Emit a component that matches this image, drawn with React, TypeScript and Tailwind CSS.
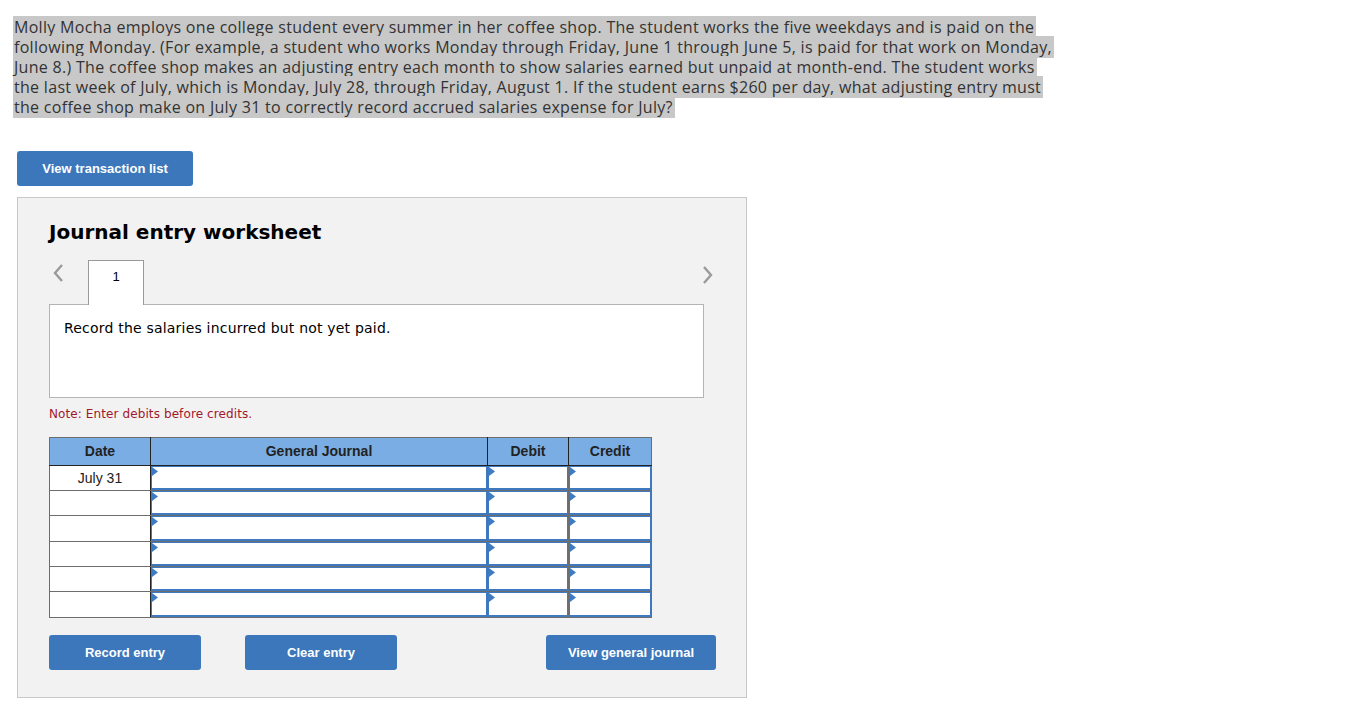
const LINES = [
  "Molly Mocha employs one college student every summer in her coffee shop. The student works the five weekdays and is paid on the",
  "following Monday. (For example, a student who works Monday through Friday, June 1 through June 5, is paid for that work on Monday,",
  "June 8.) The coffee shop makes an adjusting entry each month to show salaries earned but unpaid at month-end. The student works",
  "the last week of July, which is Monday, July 28, through Friday, August 1. If the student earns $260 per day, what adjusting entry must",
  "the coffee shop make on July 31 to correctly record accrued salaries expense for July?",
];

const ROWS = [
  { date: "July 31", h: "h-[25px]", inner: "h-[24px]" },
  { date: "", h: "h-[25px]", inner: "h-[24px]" },
  { date: "", h: "h-[26px]", inner: "h-[25px]" },
  { date: "", h: "h-[25px]", inner: "h-[24px]" },
  { date: "", h: "h-[25px]", inner: "h-[24px]" },
  { date: "", h: "h-[26px]", inner: "h-[25px]" },
];

function Marker() {
  return (
    <svg width="6" height="9" viewBox="0 0 6 9" className="absolute left-0 top-0">
      <path d="M0 0 L6 4.5 L0 9 Z" fill="#3d7cc4" />
    </svg>
  );
}

function InputCell({ w, inner }: { w: string; inner: string }) {
  return (
    <td className={`${w} border border-[#6d6d6d] bg-white p-0`}>
      <div className={`relative ${inner} border border-[#3f79c0] border-b-2 bg-white`}>
        <Marker />
      </div>
    </td>
  );
}

function BlueButton({ label, className }: { label: string; className?: string }) {
  return (
    <button
      className={`h-[35px] rounded-[3px] bg-[#3b77ba] text-[13px] font-bold text-white ${className ?? ""}`}
      style={{ fontFamily: "'Liberation Sans', Arial, sans-serif" }}
    >
      {label}
    </button>
  );
}

export default function App() {
  return (
    <div className="min-h-[701px] bg-white px-[13px] pt-[17px]">
      <p
        className="text-[16px] leading-5 tracking-[0.3px] text-[#333]"
        style={{ fontFamily: "'Open Sans', sans-serif" }}
      >
        {LINES.map((l, i) => (
          <span key={i}>
            <span className="bg-[#c8c8c8] pr-[2px] pl-[1px]">{l}</span>
            {i < LINES.length - 1 && <br />}
          </span>
        ))}
      </p>

      <div className="mt-[34px] pl-[4px]">
        <BlueButton label="View transaction list" className="w-[176px]" />
      </div>

      <div className="mt-[11px] ml-[4px] w-[730px] border border-[#c8c8c8] bg-[#f2f2f2] px-[31px] pt-[19px] pb-[27px]">
        <h2
          className="text-[20px] font-bold text-black"
          style={{ fontFamily: "'DejaVu Sans', Verdana, sans-serif" }}
        >
          Journal entry worksheet
        </h2>

        <div className="mt-[13px] flex w-[665px] items-end">
          <div className="flex h-[44px] w-[39px] items-start justify-start pl-[2px] pt-[2px]">
            <svg width="14" height="22" viewBox="0 0 14 22">
              <path d="M11 3 L4 11 L11 19" stroke="#9a9a9a" strokeWidth="2.4" fill="none" />
            </svg>
          </div>
          <div
            className="relative z-10 -mb-px flex h-[45px] w-[56px] justify-center border border-b-0 border-[#999] bg-white pt-[6px] text-[13px] text-black"
            style={{ fontFamily: "'Liberation Sans', Arial, sans-serif" }}
          >
            1
          </div>
          <div className="flex h-[44px] flex-1 items-start justify-end pt-[4px]">
            <svg width="14" height="22" viewBox="0 0 14 22">
              <path d="M4 3 L11 11 L4 19" stroke="#9a9a9a" strokeWidth="2.4" fill="none" />
            </svg>
          </div>
        </div>

        <div
          className="h-[94px] w-[655px] border border-[#b4b4b4] bg-white px-[14px] pt-[13px] text-[14px] tracking-[0.2px] text-black"
          style={{ fontFamily: "'DejaVu Sans', Verdana, sans-serif" }}
        >
          Record the salaries incurred but not yet paid.
        </div>

        <p
          className="mt-[7px] text-[12px] tracking-[0.1px] text-[#a3172b]"
          style={{ fontFamily: "'DejaVu Sans', Verdana, sans-serif" }}
        >
          Note: Enter debits before credits.
        </p>

        <table
          className="mt-[14px] border-collapse border border-[#6d6d6d] text-[14px]"
          style={{ fontFamily: "'Liberation Sans', Arial, sans-serif" }}
        >
          <thead>
            <tr className="h-[28px] bg-[#7aade3] font-bold text-[#222]">
              <th className="w-[101px] border border-[#6d6d6d] border-b-[#222] border-r-[#222]">Date</th>
              <th className="w-[337px] border border-[#6d6d6d] border-b-[#222] border-r-[#222]">General Journal</th>
              <th className="w-[81px] border border-[#6d6d6d] border-b-[#222] border-r-[#222]">Debit</th>
              <th className="w-[83px] border border-[#6d6d6d] border-b-[#222]">Credit</th>
            </tr>
          </thead>
          <tbody>
            {ROWS.map((r, i) => (
              <tr key={i} className={r.h}>
                <td className="w-[101px] border border-[#6d6d6d] border-r-[#222] bg-white text-center text-[#222]">
                  {r.date}
                </td>
                <InputCell w="w-[337px]" inner={r.inner} />
                <InputCell w="w-[81px]" inner={r.inner} />
                <InputCell w="w-[83px]" inner={r.inner} />
              </tr>
            ))}
          </tbody>
        </table>

        <div className="mt-[17px] flex w-[667px]">
          <BlueButton label="Record entry" className="w-[152px]" />
          <BlueButton label="Clear entry" className="ml-[44px] w-[152px]" />
          <BlueButton label="View general journal" className="ml-auto w-[170px]" />
        </div>
      </div>
    </div>
  );
}
